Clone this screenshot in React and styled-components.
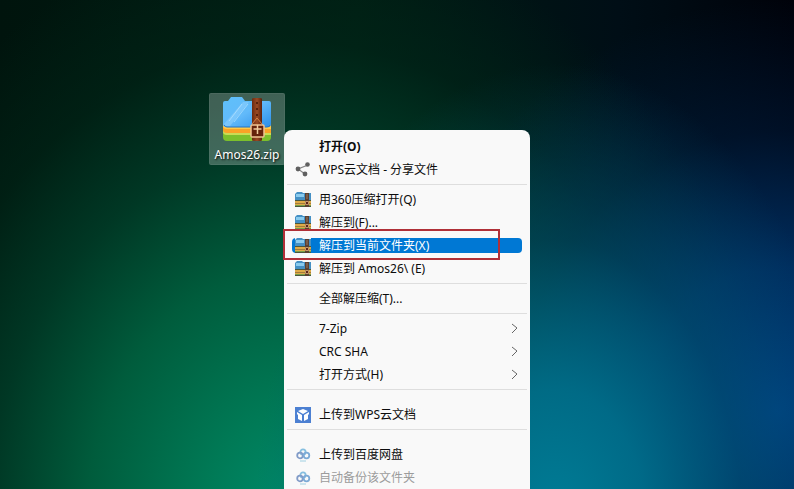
import React from "react";
import styled, { createGlobalStyle, css } from "styled-components";

const GlobalStyle = createGlobalStyle`
  * { box-sizing: border-box; }
  body {
    margin: 0;
    overflow: hidden;
    font-family: "Noto Sans", "Noto Sans CJK SC", sans-serif;
    font-size: 12px;
  }
`;

const Desktop = styled.main`
  position: relative;
  height: 100vh;
  overflow: hidden;
  background:
    radial-gradient(ellipse 38% 95% at 70% 108%, rgba(0, 126, 152, 1) 0%, rgba(0, 116, 144, 0.85) 30%, rgba(0, 90, 115, 0.45) 62%, rgba(0, 50, 70, 0) 100%),
    radial-gradient(ellipse 48% 84% at 98% 84%, rgba(0, 62, 128, 1) 0%, rgba(0, 56, 116, 0.8) 35%, rgba(0, 36, 80, 0.4) 68%, rgba(0, 20, 50, 0) 100%),
    radial-gradient(ellipse 62% 122% at 37% 106%, #008c6c 0%, #007a56 18%, #005c3c 42%, rgba(0, 64, 42, 0.8) 62%, rgba(0, 42, 26, 0.5) 80%, rgba(0, 24, 16, 0) 100%),
    linear-gradient(90deg, #00140d 0%, #001c12 45%, #000e16 78%, #00020a 100%);
`;

const FileTile = styled.button`
  position: absolute;
  left: 209px;
  top: 93px;
  display: flex;
  flex-direction: column;
  align-items: center;
  gap: 5px;
  width: 76px;
  padding: 2px 0 1px;
  border: 1px solid rgba(255, 255, 255, 0.06);
  border-radius: 2px;
  background: rgba(255, 255, 255, 0.25);
  color: #fff;
  font: inherit;
  line-height: 16px;
  text-shadow: 1px 1px 2px #000;
`;

const Menu = styled.nav`
  position: absolute;
  left: 284px;
  top: 130px;
  width: 246px;
  padding: 5px 0;
  border-radius: 8px 8px 0 0;
  background: #f9f9f9;
`;

const MenuRow = styled.button`
  display: flex;
  align-items: center;
  gap: 8px;
  width: calc(100% - 16px);
  height: 23px;
  margin: 0 8px;
  padding: 0 3px;
  border: 0;
  border-radius: 4px;
  background: transparent;
  color: #0c0c0c;
  font: inherit;
  font-weight: ${(p) => (p.$strong ? 700 : 400)};
  line-height: 15px;
  text-align: left;
  white-space: nowrap;

  &:disabled { color: #9c9c9c; }

  ${(p) => p.$active && css`
    height: 15px;
    margin: 4px 8px;
    background: #0078d4;
    color: #fff;
  `}
`;

const IconSlot = styled.span`
  display: flex;
  flex: 0 0 16px;
  height: 16px;
  background: ${(p) => (p.$patch ? "#f2f8fc" : "transparent")};
`;

const Label = styled.span`
  flex: 1;
`;

const Separator = styled.hr`
  height: 1px;
  margin: 3px 3px ${(p) => (p.$wide ? 13 : 3)}px;
  border: 0;
  background: #dedede;
`;

const Marker = styled.div`
  position: absolute;
  left: 283px;
  top: 229px;
  width: 217px;
  height: 31px;
  border: 2px solid #b03038;
  pointer-events: none;
`;

function BigArchive() {
  return (
    <svg width="50" height="46" viewBox="0 0 50 46" aria-hidden="true">
      <defs>
        <linearGradient id="folder" x1="0" y1="0" x2="1" y2="1">
          <stop offset="0" stopColor="#5fc0fa" />
          <stop offset="0.5" stopColor="#62bafa" />
          <stop offset="1" stopColor="#2b8ee8" />
        </linearGradient>
        <linearGradient id="strap">
          <stop offset="0" stopColor="#6b2a10" />
          <stop offset="0.5" stopColor="#9a4a24" />
          <stop offset="1" stopColor="#5c210c" />
        </linearGradient>
      </defs>
      <path d="M1 32h48v9q0 4-4 4H5q-4 0-4-4z" fill="#7cc02c" />
      <path d="M1 32h48v7H5q-4 0-4-3z" fill="#c9dc55" />
      <path d="M1 28h48v9H5q-4 0-4-3z" fill="#f9a326" />
      <path d="M1 28h48v5H5q-4 0-4-3z" fill="#ffc94a" />
      <path d="M1 7q0-2 2-2h3l3-4h11l3 4h24q2 0 2 2v21q0 3-3 3H4q-3 0-3-3z" fill="url(#folder)" />
      <path d="M2 28 21 6h6L8 30H4z" fill="#a9ddff" opacity="0.35" />
      <path d="m7 25 13-17m-8 18L26 8" fill="none" stroke="#c0e7ff" opacity="0.6" />
      <path d="M2 29q1 2 3 2h40q3 0 3-2" fill="none" stroke="#2474c5" />
      <path d="M30 3q0-1 2-1h6q2 0 2 1v41q0 1-2 1h-6q-2 0-2-1z" fill="url(#strap)" />
      <path d="M35 6v2m0 4v2m0 4v2" stroke="#441604" strokeWidth="1.500" />
      <path d="m30 28 5-6 5 6" fill="none" stroke="#d58245" />
      <rect x="29" y="29" width="13" height="12" rx="1" fill="#65230c" stroke="#efc391" strokeWidth="1.500" />
      <path d="M35.500 29v9m-4-5h8" stroke="#f2cc9d" strokeWidth="1.500" />
    </svg>
  );
}

function Archive() {
  return (
    <svg width="16" height="16" viewBox="0 0 16 16" aria-hidden="true">
      <path d="M0 9h16v6H0z" fill="#78a04a" />
      <path d="M0 8h16v5H0z" fill="#dfaa48" />
      <path d="M0 2l2-2h5l1 1h8v7H0z" fill="#4590c4" />
      <path d="M1 2h8v3H1z" fill="#8acbee" />
      <path d="M0 8.500h16M0 14.500h16" stroke="#4a563e" />
      <path d="M0 11.500h16" stroke="#a07c3c" />
      <path d="M10 1h4v14h-4z" fill="#5a4030" />
      <path d="M12 2v5" stroke="#9a7860" />
      <path d="M10.500 9.500h3v3h-3z" fill="#5c2418" stroke="#c49a6c" />
    </svg>
  );
}

function Share() {
  return (
    <svg width="16" height="16" viewBox="0 0 16 16" aria-hidden="true">
      <path d="M13 3 3 7l7 5" fill="none" stroke="#858585" strokeWidth="1.200" />
      <g fill="#606060"><circle cx="12.500" cy="2.500" r="2.300" /><circle cx="3" cy="7" r="2.400" /><circle cx="10" cy="12" r="2.400" /></g>
    </svg>
  );
}

function WpsCloud() {
  return (
    <svg width="16" height="16" viewBox="0 0 16 16" aria-hidden="true">
      <path d="M0 0h16v16H0z" fill="#4c80d2" />
      <path d="m8 2 5 2-5 3-5-3zM2 5l5 3v6l-4-2V8L2 7zM14 5 9 8v6l4-2V8l1-1z" fill="#fff" />
    </svg>
  );
}

function Baidu() {
  return (
    <svg width="16" height="16" viewBox="0 0 16 16" aria-hidden="true">
      <g fill="none" strokeWidth="1.800">
        <circle cx="8" cy="5" r="2.600" stroke="#86bfe0" />
        <circle cx="5" cy="8.500" r="2.800" stroke="#829cc8" />
        <circle cx="11.500" cy="8.500" r="2.800" stroke="#7caad6" />
      </g>
      <path d="M5 14h6" stroke="#9fd0e2" />
    </svg>
  );
}

function Chevron() {
  return (
    <svg width="8" height="12" viewBox="0 0 8 12" aria-hidden="true">
      <path d="m1 1 5 4-5 5" fill="none" stroke="#666" />
    </svg>
  );
}

function Item({ icon, children, submenu, active, ...rest }) {
  return (
    <MenuRow type="button" $active={active} {...rest}>
      <IconSlot $patch={active}>{icon}</IconSlot>
      <Label>{children}</Label>
      {submenu && <Chevron />}
    </MenuRow>
  );
}

export default function App() {
  return (
    <>
      <GlobalStyle />
      <Desktop>
        <FileTile type="button"><BigArchive /><span>Amos26.zip</span></FileTile>
        <Menu>
          <Item $strong>打开(O)</Item>
          <Item icon={<Share />}>WPS云文档 - 分享文件</Item>
          <Separator />
          <Item icon={<Archive />}>用360压缩打开(Q)</Item>
          <Item icon={<Archive />}>解压到(F)...</Item>
          <Item icon={<Archive />} active>解压到当前文件夹(X)</Item>
          <Item icon={<Archive />}>解压到 Amos26\ (E)</Item>
          <Separator />
          <Item>全部解压缩(T)...</Item>
          <Separator />
          <Item submenu>7-Zip</Item>
          <Item submenu>CRC SHA</Item>
          <Item submenu>打开方式(H)</Item>
          <Separator $wide />
          <Item icon={<WpsCloud />}>上传到WPS云文档</Item>
          <Separator $wide />
          <Item icon={<Baidu />}>上传到百度网盘</Item>
          <Item icon={<Baidu />} disabled>自动备份该文件夹</Item>
        </Menu>
        <Marker />
      </Desktop>
    </>
  );
}
